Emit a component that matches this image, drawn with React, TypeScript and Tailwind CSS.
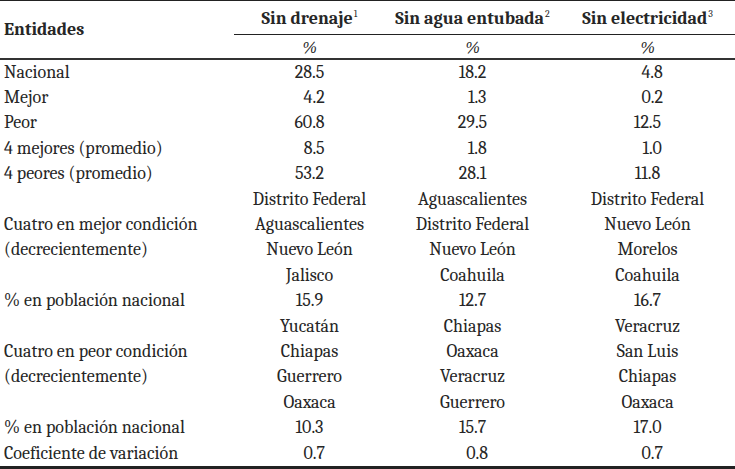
const fs = "\u2007";

const rows: string[][] = [
  ["Nacional", "28.5", "18.2", fs + "4.8"],
  ["Mejor", fs + "4.2", fs + "1.3", fs + "0.2"],
  ["Peor", "60.8", "29.5", "12.5"],
  ["4 mejores (promedio)", fs + "8.5", fs + "1.8", fs + "1.0"],
  ["4 peores (promedio)", "53.2", "28.1", "11.8"],
  ["", "Distrito Federal", "Aguascalientes", "Distrito Federal"],
  ["Cuatro en mejor condición", "Aguascalientes", "Distrito Federal", "Nuevo León"],
  ["(decrecientemente)", "Nuevo León", "Nuevo León", "Morelos"],
  ["", "Jalisco", "Coahuila", "Coahuila"],
  ["% en población nacional", "15.9", "12.7", "16.7"],
  ["", "Yucatán", "Chiapas", "Veracruz"],
  ["Cuatro en peor condición", "Chiapas", "Oaxaca", "San Luis"],
  ["(decrecientemente)", "Guerrero", "Veracruz", "Chiapas"],
  ["", "Oaxaca", "Guerrero", "Oaxaca"],
  ["% en población nacional", "10.3", "15.7", "17.0"],
  ["Coeficiente de variación", fs + "0.7", fs + "0.8", fs + "0.7"],
];

const headers = [
  { label: "Sin drenaje", sup: "1" },
  { label: "Sin agua entubada", sup: "2" },
  { label: "Sin electricidad", sup: "3" },
];

const cols = "grid grid-cols-[234px_151px_175px_175px]";

export default function App() {
  return (
    <div className="w-[735px] h-[469px] bg-white text-[#262626] font-serif text-[18px] overflow-hidden">
      <div className="border-t border-[#222]" />
      <div className={cols}>
        <div className="row-span-2 flex items-center pl-1 font-bold text-[18px]">
          Entidades
        </div>
        <div className="col-span-3 grid grid-cols-[151px_175px_175px] border-b border-[#222]">
          {headers.map((h) => (
            <div key={h.label} className="h-[33px] flex items-end justify-center pb-[6px] font-bold text-[18px] leading-none">
              <span>
                {h.label}
                <span className="text-[10px] font-normal relative -top-[7px] ml-[1px]">{h.sup}</span>
              </span>
            </div>
          ))}
        </div>
        {headers.map((h) => (
          <div key={h.label + "p"} className="h-[23px] flex items-center justify-center text-[17px] italic leading-none pt-[2px]">
            %
          </div>
        ))}
      </div>
      <div className="border-b-2 border-[#333]" />
      <div className="flex flex-col">
        {rows.map((r, i) => (
          <div key={i} className={cols + " h-[25.4px] items-center leading-none"}>
            <div className="pl-1 whitespace-nowrap">{r[0]}</div>
            <div className="text-center whitespace-pre">{r[1]}</div>
            <div className="text-center whitespace-pre">{r[2]}</div>
            <div className="text-center whitespace-pre">{r[3]}</div>
          </div>
        ))}
      </div>
      <div className="border-b-[3px] border-[#222]" />
    </div>
  );
}
